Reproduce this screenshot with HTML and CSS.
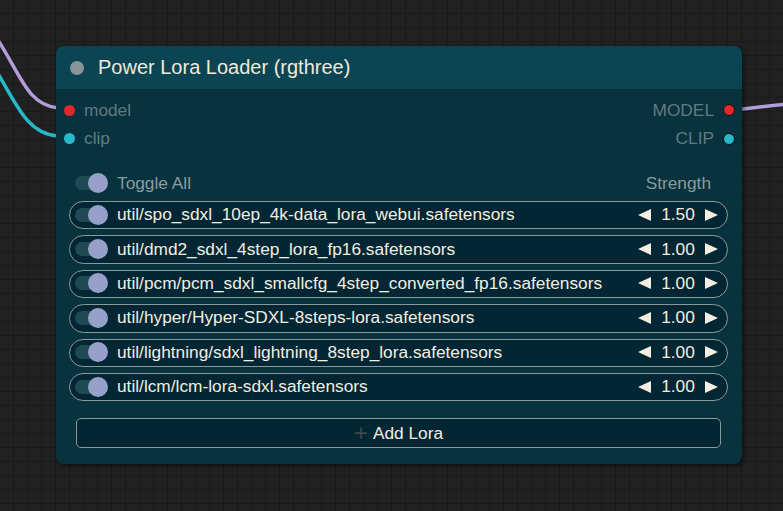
FILE: index.html
```html
<!DOCTYPE html>
<html lang="en">
<head>
  <meta charset="UTF-8" />
  <title>Power Lora Loader</title>
  <link rel="stylesheet" href="styles.css">
</head>
<body>

  <div class="canvas">

    <!-- links between nodes -->
    <svg class="links" width="783" height="511" viewBox="0 0 783 511">
      <path d="M -10 28 C 20 70, 25 105, 58 108" stroke="#b39ddb" stroke-width="3.5" fill="none"/>
      <path d="M -10 60 C 15 100, 25 134, 58 136" stroke="#26b8c8" stroke-width="3.5" fill="none"/>
      <path d="M 734 110 C 750 108, 765 106, 790 104" stroke="#b39ddb" stroke-width="3.5" fill="none"/>
    </svg>

    <div class="node">
      <div class="node-title">
        <span class="collapse-dot"></span>
        <span>Power Lora Loader (rgthree)</span>
      </div>

      <div class="slots">
        <div class="slot-row">
          <div class="slot"><span class="dot red"></span>model</div>
          <div class="slot out">MODEL<span class="dot red"></span></div>
        </div>
        <div class="slot-row">
          <div class="slot"><span class="dot cyan"></span>clip</div>
          <div class="slot out">CLIP<span class="dot cyan"></span></div>
        </div>
      </div>

      <div class="widgets">
        <div class="header-row">
          <span class="toggle"></span>
          <span class="label">Toggle All</span>
          <span class="strength">Strength</span>
        </div>

        <div class="lora-list" id="loraList">
          <!-- lora rows inserted here -->
        </div>

        <button class="add-btn"><span class="plus">+</span>Add Lora</button>
      </div>
    </div>

  </div>

  <script>
    const loras = [
      ["util/spo_sdxl_10ep_4k-data_lora_webui.safetensors", 1.5],
      ["util/dmd2_sdxl_4step_lora_fp16.safetensors", 1],
      ["util/pcm/pcm_sdxl_smallcfg_4step_converted_fp16.safetensors", 1],
      ["util/hyper/Hyper-SDXL-8steps-lora.safetensors", 1],
      ["util/lightning/sdxl_lightning_8step_lora.safetensors", 1],
      ["util/lcm/lcm-lora-sdxl.safetensors", 1]
    ];

    const list = document.getElementById("loraList");
    for (const [name, strength] of loras) {
      const row = document.createElement("div");
      row.className = "lora-row";
      row.innerHTML = `<span class="toggle"></span>
        <span class="name">${name}</span>
        <span class="arrow left"></span>
        <span class="value">${strength.toFixed(2)}</span>
        <span class="arrow right"></span>`;
      list.appendChild(row);
    }
  </script>

</body>
</html>
```

FILE: styles.css
```css
body {
  margin: 0;
  font-family: 'Liberation Sans', Arial, sans-serif;
  background-color: #212121;
  overflow: hidden;
}

.canvas {
  position: relative;
  width: 783px;
  height: 511px;
  background-color: #212121;
  background-image:
    linear-gradient(to right, #1a1a1a 1px, transparent 1px),
    linear-gradient(to bottom, #1a1a1a 1px, transparent 1px);
  background-size: 14px 14px;
  background-position: -1px -1px;
}

.links {
  position: absolute;
  left: 0;
  top: 0;
}

.node {
  position: absolute;
  left: 56px;
  top: 46px;
  width: 686px;
  height: 418px;
  background-color: #08323e;
  border-radius: 8px;
  box-shadow: 2px 2px 4px rgba(0, 0, 0, 0.5);
  overflow: hidden;
}

.node-title {
  height: 44px;
  background-color: #0b4452;
  border-bottom: 1px solid #073039;
  box-sizing: border-box;
  display: flex;
  align-items: center;
  padding-left: 14px;
  gap: 14px;
  color: #efeadb;
  font-size: 20px;
}

.collapse-dot {
  width: 14px;
  height: 14px;
  border-radius: 50%;
  background-color: #8a9597;
}

.slots {
  padding: 6px 0 0;
}

.slot-row {
  height: 28.5px;
  display: flex;
  justify-content: space-between;
  align-items: center;
}

.slot {
  display: flex;
  align-items: center;
  gap: 9px;
  padding-left: 8px;
  color: #617b81;
  font-size: 17.3px;
}

.slot.out {
  padding-left: 0;
  padding-right: 7px;
  gap: 9px;
}

.dot {
  width: 11px;
  height: 11px;
  border-radius: 50%;
}

.slot.out .dot {
  width: 10px;
  height: 10px;
  border: 1px solid #111;
}

.red {
  background-color: #e0282c;
}

.cyan {
  background-color: #27b9c9;
}

.widgets {
  padding: 16px 14px 0 13px;
}

.header-row {
  height: 28px;
  display: flex;
  align-items: center;
  padding-left: 6px;
  color: #899c9f;
  font-size: 17.3px;
}

.toggle {
  position: relative;
  flex: none;
  width: 32px;
  height: 14px;
  border-radius: 7px;
  background-color: #204a53;
  margin-right: 10px;
}

.toggle::after {
  content: "";
  position: absolute;
  right: -1px;
  top: -3px;
  width: 20px;
  height: 20px;
  border-radius: 50%;
  background-color: #97a0c9;
}

.header-row .label {
  flex: 1;
}

.header-row .strength {
  padding-right: 17px;
}

.lora-list {
  display: flex;
  flex-direction: column;
  gap: 6px;
  margin-top: 4px;
}

.lora-row {
  height: 28.4px;
  box-sizing: border-box;
  border: 1.5px solid #8a9a9c;
  border-radius: 15px;
  background-color: #022633;
  display: flex;
  align-items: center;
  padding-left: 5px;
  padding-right: 9px;
  padding-bottom: 1px;
  color: #f3eee0;
  font-size: 17.3px;
}

.lora-row .name {
  flex: 1;
  white-space: nowrap;
}

.lora-row .value {
  width: 36px;
  margin: 0 9px;
  text-align: center;
}

.arrow {
  width: 0;
  height: 0;
  border-top: 6px solid transparent;
  border-bottom: 6px solid transparent;
}

.arrow.left {
  border-right: 13px solid #f3eee0;
}

.arrow.right {
  border-left: 13px solid #f3eee0;
}

.add-btn {
  display: flex;
  align-items: center;
  justify-content: center;
  width: 645px;
  height: 29.5px;
  margin: 17px 0 0 7px;
  padding-bottom: 1px;
  background-color: #022633;
  border: 1.5px solid #8a9a9c;
  border-radius: 5px;
  color: #f3eee0;
  font-family: 'Liberation Sans', Arial, sans-serif;
  font-size: 17.3px;
}

.add-btn .plus {
  color: #3d4a4e;
  font-size: 24px;
  margin-right: 5px;
  line-height: 1;
}
```
